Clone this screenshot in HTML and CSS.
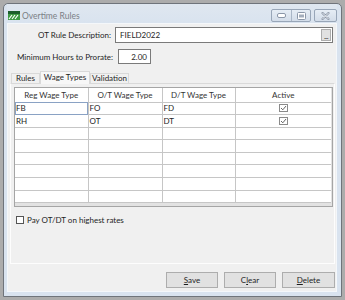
FILE: index.html
```html
<!DOCTYPE html>
<html lang="en">
<head>
  <meta charset="UTF-8">
  <title>Overtime Rules</title>
  <link rel="stylesheet" href="styles.css">
</head>
<body>
  <div class="window">
    <div class="titlebar">
      <svg class="app-icon" width="12" height="9" viewBox="0 0 12 9">
        <rect x="0" y="0" width="12" height="9" fill="#3f9a44"/>
        <rect x="0" y="0" width="12" height="3" fill="#1d5e2c"/>
        <path d="M1 8 L4 4 M4 8 L7 4 M7 8 L10 4" stroke="#fff" stroke-width="1.2"/>
      </svg>
      <span class="title">Overtime Rules</span>
      <div class="controls">
        <div class="ctl-group">
          <span class="ctl">
            <svg width="9" height="5" viewBox="0 0 9 5"><rect x="0.5" y="0.5" width="8" height="4" rx="1.5" fill="#fff" stroke="#8b97a8"/></svg>
          </span>
          <span class="ctl">
            <svg width="9" height="8" viewBox="0 0 9 8"><rect x="0.5" y="0.5" width="8" height="7" rx="1" fill="#fff" stroke="#8b97a8"/><rect x="2" y="2.5" width="5" height="3" fill="#a3adbb"/></svg>
          </span>
        </div>
        <span class="ctl close">
          <svg width="9" height="8" viewBox="0 0 9 8"><path d="M1.5 1 L7.5 7 M7.5 1 L1.5 7" stroke="#8b97a8" stroke-width="2.2" stroke-linecap="round"/><path d="M1.5 1 L7.5 7 M7.5 1 L1.5 7" stroke="#fff" stroke-width="0.8" stroke-linecap="round"/></svg>
        </span>
      </div>
    </div>

    <div class="client">
      <div class="field-row row-desc">
        <label>OT Rule Description:</label>
        <div class="textbox desc">
          <span>FIELD2022</span>
          <span class="dots">...</span>
        </div>
      </div>

      <div class="field-row row-hours">
        <label>Minimum Hours to Prorate:</label>
        <div class="textbox hours">2.00</div>
      </div>

      <div class="tabs">
        <span class="tab">Rules</span>
        <span class="tab active">Wage Types</span>
        <span class="tab">Validation</span>
      </div>

      <div class="tab-page">
        <div class="grid">
          <table>
            <thead>
              <tr>
                <th class="c1">Reg Wage Type</th>
                <th class="c2">O/T Wage Type</th>
                <th class="c3">D/T Wage Type</th>
                <th class="c4">Active</th>
              </tr>
            </thead>
            <tbody>
              <tr>
                <td class="focus">FB</td><td>FO</td><td>FD</td>
                <td class="chk"><svg width="9" height="8" viewBox="0 0 9 8"><rect x="0.5" y="0.5" width="8" height="7" fill="#fff" stroke="#8a8a8a"/><path d="M2 4 L3.8 5.8 L7 2" fill="none" stroke="#555" stroke-width="0.9"/></svg></td>
              </tr>
              <tr>
                <td>RH</td><td>OT</td><td>DT</td>
                <td class="chk"><svg width="9" height="8" viewBox="0 0 9 8"><rect x="0.5" y="0.5" width="8" height="7" fill="#fff" stroke="#8a8a8a"/><path d="M2 4 L3.8 5.8 L7 2" fill="none" stroke="#555" stroke-width="0.9"/></svg></td>
              </tr>
              <tr><td></td><td></td><td></td><td></td></tr>
              <tr><td></td><td></td><td></td><td></td></tr>
              <tr><td></td><td></td><td></td><td></td></tr>
              <tr><td></td><td></td><td></td><td></td></tr>
              <tr><td></td><td></td><td></td><td></td></tr>
              <tr><td></td><td></td><td></td><td></td></tr>
            </tbody>
          </table>
        </div>

        <label class="check-row">
          <span class="checkbox"></span>
          <span>Pay OT/DT on highest rates</span>
        </label>
      </div>

      <div class="buttons">
        <button class="btn"><u>S</u>ave</button>
        <button class="btn">C<u>l</u>ear</button>
        <button class="btn"><u>D</u>elete</button>
      </div>
    </div>
  </div>
</body>
</html>
```

FILE: styles.css
```css
:root {
  --frame: #d9e3ef;
  --face: #f0f0f0;
  --line: #c6c6c6;
}

* {
  box-sizing: border-box;
}

body {
  margin: 0;
  padding: 3px 0 0 3px;
  background: #acacac;
  font-family: Lato, "Noto Sans", sans-serif;
  font-size: 8px;
  color: #1e1e1e;
}

.window {
  width: 339px;
  height: 294px;
  border: 1px solid #6f747b;
  border-radius: 5px 5px 0 0;
  background: var(--frame);
  padding: 0 4px 0 3px;
  display: flex;
  flex-direction: column;
}

/* title bar */
.titlebar {
  height: 19px;
  display: flex;
  align-items: center;
  padding-left: 1px;
  background: linear-gradient(#dfe7f0, #d9e3ef);
}

.app-icon {
  margin-top: 3px;
}

.title {
  margin-left: 2px;
  margin-top: 4px;
  color: #7b7f85;
  font-size: 8.5px;
}

.controls {
  margin-left: auto;
  display: flex;
  gap: 3px;
  align-self: flex-start;
  margin-top: 5px;
}

.ctl-group {
  display: flex;
  border: 1px solid #98a6b8;
  border-radius: 2px;
  background: linear-gradient(#e6edf5, #d3dde9);
}

.ctl {
  width: 19px;
  height: 11px;
  display: flex;
  align-items: center;
  justify-content: center;
}

.ctl-group .ctl + .ctl {
  border-left: 1px solid #a9b6c6;
}

.ctl.close {
  width: 23px;
  height: 13px;
  border: 1px solid #98a6b8;
  border-radius: 2px;
  background: linear-gradient(#e6edf5, #d3dde9);
}

/* client area */
.client {
  flex: 1;
  margin-bottom: 4px;
  background: var(--face);
  border: 1px solid #f4f7fa;
  display: flex;
  flex-direction: column;
}

.field-row {
  display: flex;
  align-items: center;
}

.field-row label {
  text-align: right;
}

.row-desc {
  margin-top: 3px;
  height: 16px;
}

.row-desc label {
  width: 103px;
  margin-right: 4px;
}

.row-hours {
  margin-top: 6px;
  height: 15px;
}

.row-hours label {
  width: 105px;
  margin-right: 5px;
}

.textbox {
  height: 100%;
  background: #fff;
  border: 1px solid #7a7a7a;
  display: flex;
  align-items: center;
}

.textbox.desc {
  width: 218px;
  padding-left: 4px;
}

.textbox.hours {
  width: 33px;
  justify-content: flex-end;
  padding-right: 3px;
}

.dots {
  margin-left: auto;
  margin-right: 1px;
  width: 10px;
  height: 12px;
  background: #e1e1e1;
  border: 1px solid #adadad;
  font-size: 8px;
  line-height: 8px;
  letter-spacing: -0.5px;
  display: flex;
  align-items: flex-end;
  justify-content: center;
  color: #333;
}

/* tabs */
.tabs {
  margin-top: 7px;
  height: 12px;
  display: flex;
  align-items: flex-end;
  padding-left: 3px;
  position: relative;
  z-index: 1;
}

.tab {
  height: 10px;
  border: 1px solid #d9d9d9;
  border-bottom: 0;
  background: var(--face);
  padding: 0;
  line-height: 9px;
  text-align: center;
  white-space: nowrap;
}

.tab:first-child {
  width: 29px;
}

.tab.active {
  height: 13px;
  width: 50px;
  margin-bottom: -1px;
  background: #f7f7f7;
  line-height: 11px;
}

.tab:last-child {
  width: 39px;
}

/* tab page */
.tab-page {
  margin: 0 1px 0 2px;
  height: 181px;
  border: 1px solid #fdfdfd;
  border-top-color: #d9d9d9;
  background: var(--face);
  padding: 3px 0 0 3px;
}

.grid {
  width: 319px;
  height: 120px;
  border: 1px solid #a5a5a5;
  background: #e2e2e2;
  overflow: hidden;
}

.grid table {
  width: 316px;
  border-collapse: collapse;
  table-layout: fixed;
  background: #fff;
}

.grid th {
  height: 14px;
  font-weight: normal;
  color: #333;
  text-align: center;
  border-right: 1px solid var(--line);
  border-bottom: 1px solid var(--line);
  padding: 0;
}

.grid td {
  height: 12.6px;
  padding: 0 0 0 1px;
  border-right: 1px solid var(--line);
  border-bottom: 1px solid var(--line);
  line-height: 10px;
}

.grid th:last-child,
.grid td:last-child {
  border-right: 0;
}

.grid .c1 { width: 73px; }
.grid .c2 { width: 74px; }
.grid .c3 { width: 73px; }

.grid td.focus {
  outline: 1px solid #8aa2c4;
  outline-offset: -1px;
}

.grid td.chk {
  text-align: center;
  padding: 0;
}

.grid td.chk svg {
  display: block;
  margin: 0 auto;
}

.check-row {
  margin-top: 8px;
  display: flex;
  align-items: center;
  gap: 3px;
  padding-left: 2px;
}

.checkbox {
  width: 8px;
  height: 8px;
  background: #fff;
  border: 1px solid #555;
}

/* buttons */
.buttons {
  margin-top: 8px;
  display: flex;
  justify-content: flex-end;
  gap: 6px;
  padding-right: 1px;
}

.btn {
  width: 52px;
  height: 16px;
  padding: 0;
  background: #e1e1e1;
  border: 1px solid #adadad;
  font-family: inherit;
  font-size: 8px;
  color: #1e1e1e;
}

.btn:last-child {
  width: 53px;
}
```
